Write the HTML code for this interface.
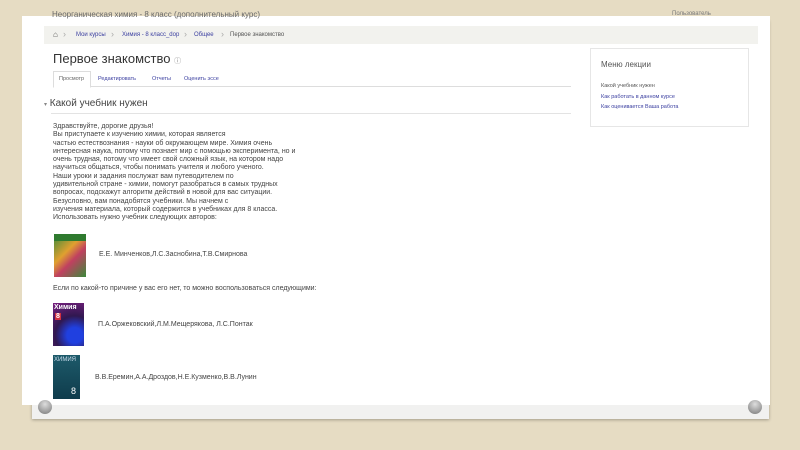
<!DOCTYPE html>
<html><head><meta charset="utf-8"><style>
*{margin:0;padding:0;box-sizing:border-box}
body{width:800px;height:450px;overflow:hidden;background:#e6dcc3;font-family:"Liberation Sans","DejaVu Sans",sans-serif;position:relative;color:#333}
.paper{position:absolute;left:32px;top:20px;width:737px;height:399px;background:#f1f1f0;box-shadow:0 1px 3px rgba(0,0,0,.3)}
.panel{position:absolute;left:22px;top:16px;width:748px;height:389px;background:#fff}
.pin{position:absolute;width:14px;height:14px;border-radius:50%;background:radial-gradient(circle at 50% 30%,#ddd,#777);top:400px}
.a{position:absolute;white-space:nowrap}
.crumb{position:absolute;left:44px;top:26px;width:714px;height:18px;background:#f2f2ee;font-size:6px;color:#555}
.crumb span{position:absolute;top:6px}
.lnk{color:#3b3fa0}
.tabs{position:absolute;left:53px;top:71px;width:518px;height:16px;border-bottom:1px solid #ddd;font-size:5.5px}
.tabs span{position:absolute;top:5px;color:#3b3fa0}
.body{position:absolute;left:53px;top:123px;font-size:7px;line-height:8.3px;color:#444;white-space:nowrap}
.side{position:absolute;left:590px;top:48px;width:159px;height:79px;border:1px solid #e6e6e6}
</style></head><body>
<div class="paper"></div>
<div class="panel"></div>
<div class="pin" style="left:38px"></div>
<div class="pin" style="left:748px"></div>
<div class="a" style="left:52px;top:10px;font-size:8px;color:#666">Неорганическая химия - 8 класс (дополнительный курс)</div>
<div class="a" style="left:672px;top:11px;font-size:6px;color:#777">Пользователь</div>
<div class="crumb">
<span style="left:9px;top:4px;font-size:8px">⌂</span>
<span style="left:19px;top:3px;font-size:9px;color:#aaa">›</span>
<span class="lnk" style="left:32px">Мои курсы</span>
<span style="left:67px;top:3px;font-size:9px;color:#aaa">›</span>
<span class="lnk" style="left:78px">Химия - 8 класс_dop</span>
<span style="left:140px;top:3px;font-size:9px;color:#aaa">›</span>
<span class="lnk" style="left:150px">Общее</span>
<span style="left:177px;top:3px;font-size:9px;color:#aaa">›</span>
<span style="left:186px">Первое знакомство</span>
</div>
<div class="a" style="left:53px;top:51px;font-size:13px;color:#333">Первое знакомство <span style="font-size:7px;color:#888">ⓘ</span></div>
<div class="tabs">
<div style="position:absolute;left:0;top:0;width:38px;height:17px;border:1px solid #ddd;border-bottom:1px solid #fff;background:#fff"></div>
<span style="left:6px;color:#666">Просмотр</span>
<span style="left:45px">Редактировать</span>
<span style="left:99px">Отчеты</span>
<span style="left:131px">Оценить эссе</span>
</div>
<div class="a" style="left:44px;top:98px;font-size:10px;color:#444"><span style="font-size:6px;color:#888">▾</span> Какой учебник нужен</div>
<div style="position:absolute;left:51px;top:113px;width:520px;height:1px;background:#e3e3e3"></div>
<div class="body">Здравствуйте, дорогие друзья!<br>Вы приступаете к изучению химии, которая является<br>частью естествознания - науки об окружающем мире. Химия очень<br>интересная наука, потому что познает мир с помощью эксперимента, но и<br>очень трудная, потому что имеет свой сложный язык, на котором надо<br>научиться общаться, чтобы понимать учителя и любого ученого.<br>Наши уроки и задания послужат вам путеводителем по<br>удивительной стране - химии, помогут разобраться в самых трудных<br>вопросах, подскажут алгоритм действий в новой для вас ситуации.<br>Безусловно, вам понадобятся учебники. Мы начнем с<br>изучения материала, который содержится в учебниках для 8 класса.<br>Использовать нужно учебник следующих авторов:</div>
<div style="position:absolute;left:54px;top:234px;width:32px;height:43px;background:linear-gradient(135deg,#3a8a3a,#e0a030 40%,#c04060 60%,#3a8a3a)"></div>
<div style="position:absolute;left:54px;top:234px;width:32px;height:7px;background:#2f7a2f"></div>
<div class="a" style="left:99px;top:251px;font-size:7px;color:#444">Е.Е. Минченков,Л.С.Заснобина,Т.В.Смирнова</div>
<div class="a" style="left:53px;top:285px;font-size:7px;color:#444">Если по какой-то причине у вас его нет, то можно воспользоваться следующими:</div>
<div style="position:absolute;left:53px;top:303px;width:31px;height:43px;background:radial-gradient(circle at 70% 75%,#2040e0 20%,#301850 50%,#7a2080)"></div>
<div class="a" style="left:54px;top:304px;font-size:7px;font-weight:bold;color:#fff">Химия</div>
<div class="a" style="left:55px;top:313px;font-size:7px;font-weight:bold;color:#fff;background:#d03040;padding:0 1px">8</div>
<div class="a" style="left:98px;top:321px;font-size:7px;color:#444">П.А.Оржековский,Л.М.Мещерякова, Л.С.Понтак</div>
<div style="position:absolute;left:53px;top:355px;width:27px;height:44px;background:linear-gradient(#1d5a6a,#0f3c4c)"></div>
<div class="a" style="left:54px;top:357px;font-size:6px;color:#cde">ХИМИЯ</div>
<div class="a" style="left:71px;top:386px;font-size:9px;color:#fff">8</div>
<div class="a" style="left:95px;top:374px;font-size:7px;color:#444">В.В.Еремин,А.А.Дроздов,Н.Е.Кузменко,В.В.Лунин</div>
<div class="side">
<div class="a" style="left:10px;top:11px;font-size:8px;color:#555">Меню лекции</div>
<div class="a" style="left:10px;top:34px;font-size:5.5px;color:#555">Какой учебник нужен</div>
<div class="a lnk" style="left:10px;top:45px;font-size:5.5px">Как работать в данном курсе</div>
<div class="a lnk" style="left:10px;top:55px;font-size:5.5px">Как оценивается Ваша работа</div>
</div>
</body></html>
